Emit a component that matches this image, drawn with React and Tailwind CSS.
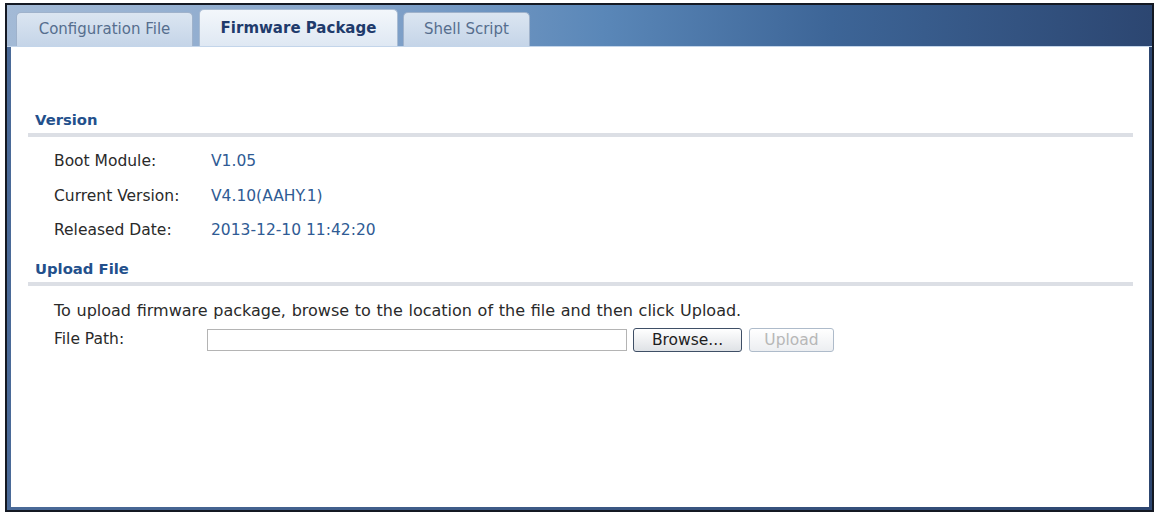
import React from "react";

const font = { fontFamily: '"DejaVu Sans", Verdana, sans-serif' };

const Tab = ({ label, active, className }) => (
  <div
    className={
      active
        ? "h-[37px] flex items-center justify-center rounded-t-[5px] border border-b-0 border-[#a9bcd3] bg-gradient-to-b from-[#f3f7fb] to-[#dfe8f3] text-[15px] font-bold text-[#1f3b6c] " + className
        : "h-[34px] flex items-center justify-center rounded-t-[5px] border border-b-0 border-[#9fb2cb] bg-gradient-to-b from-[#dbe5f1] to-[#c5d5e8] text-[15px] text-[#566e8e] " + className
    }
  >
    {label}
  </div>
);

const Row = ({ label, value }) => (
  <div className="flex items-center h-[34.5px] pl-[43px] text-[15.5px] leading-[18px]">
    <div className="w-[157px] text-[#2a2a2a]">{label}</div>
    <div className="text-[#2f5b94]">{value}</div>
  </div>
);

const SectionTitle = ({ children }) => (
  <div className="ml-[24px] text-[14.8px] font-bold leading-[18px] text-[#23508c]">
    {children}
  </div>
);

const Divider = () => <div className="ml-[17px] mr-[16px] h-[4px] bg-[#dcdfe5]" />;

export default function App() {
  return (
    <div className="w-[1159px] h-[515px] bg-white pt-[3px] px-[5px]" style={font}>
      <div className="h-[509px] border-2 border-[#141923] flex flex-col bg-gradient-to-r from-[#4a6a98] to-[#2d4670]">
        {/* tab bar */}
        <div className="h-[42px] flex items-end pl-[9px] gap-[5px] bg-[linear-gradient(to_right,#a3bad6_0%,#86a5cb_30%,#5a87b8_52%,#3d6597_72%,#2c4671_100%)] border-b border-[#c3d5ea]">
          <Tab label="Configuration File" className="w-[177px]" />
          <Tab label="Firmware Package" active className="w-[199px] ml-[1px]" />
          <Tab label="Shell Script" className="w-[127px]" />
        </div>
        {/* content */}
        <div className="flex-1 bg-white ml-[4px] mr-[3px] mb-[3px]">
          <div className="pt-[64px]">
            <SectionTitle>Version</SectionTitle>
            <div className="mt-[4px]">
              <Divider />
            </div>
            <div className="mt-[7px]">
              <Row label="Boot Module:" value="V1.05" />
              <Row label="Current Version:" value="V4.10(AAHY.1)" />
              <Row label="Released Date:" value="2013-12-10 11:42:20" />
            </div>
            <div className="mt-[12px]">
              <SectionTitle>Upload File</SectionTitle>
            </div>
            <div className="mt-[4px]">
              <Divider />
            </div>
            <div className="mt-[16px] pl-[43px] text-[16px] leading-[18px] [word-spacing:0.6px] text-[#2a2a2a]">
              To upload firmware package, browse to the location of the file and then click Upload.
            </div>
            <div className="mt-[8px] flex items-center pl-[43px] text-[15.5px] text-[#2a2a2a]">
              <div className="w-[153px]">File Path:</div>
              <input
                type="text"
                className="w-[420px] h-[22px] border border-[#b4b4b4] bg-white outline-none"
              />
              <button className="ml-[6px] w-[109px] h-[24px] rounded-[3px] border border-[#3f4f66] bg-gradient-to-b from-white to-[#dfe2e6] text-[15.5px] leading-[20px] text-[#1e1e1e]">
                Browse...
              </button>
              <button
                disabled
                className="ml-[7px] w-[85px] h-[24px] rounded-[3px] border border-[#aebbca] bg-gradient-to-b from-white to-[#eceef1] text-[15.5px] leading-[20px] text-[#b7b7b7]"
              >
                Upload
              </button>
            </div>
          </div>
        </div>
      </div>
    </div>
  );
}
